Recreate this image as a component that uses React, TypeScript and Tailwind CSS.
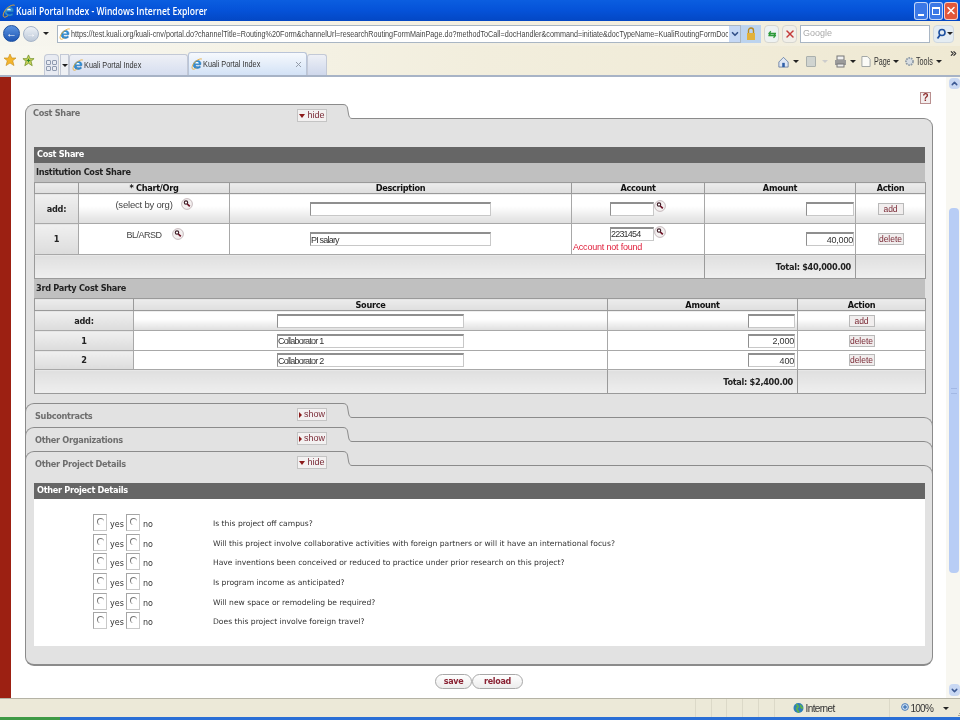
import { FC, ReactNode } from "react";
import { ChevronDown, ChevronUp, ChevronsRight, X } from "lucide-react";

const URL_TEXT =
  "https://test.kuali.org/kuali-cnv/portal.do?channelTitle=Routing%20Form&channelUrl=researchRoutingFormMainPage.do?methodToCall=docHandler&command=initiate&docTypeName=KualiRoutingFormDoc";

const verdana = "font-['DejaVu_Sans',sans-serif]";
const arial = "font-['Liberation_Sans',sans-serif]";
const boldText = "text-[8.2px] font-bold tracking-[-0.3px]";

const IeLogo: FC<{ size?: number }> = ({ size = 14 }) => (
  <svg width={size} height={size} viewBox="0 0 16 16" className="shrink-0">
    <path d="M3 9.5C3 5 7 2.5 10.5 3.5C13.5 4.5 13.5 7.5 13 9H5.5C5.8 12 9.5 12.5 12 10.5L12.5 12.5C9 15 3 14 3 9.5Z" fill="#2f8fd8" stroke="#14609f" strokeWidth="0.6" />
    <path d="M5.6 7.2H10.4C10.2 4.8 6 4.6 5.6 7.2Z" fill="#fff" />
    <path d="M14.5 1.5C12.5 0.2 6 3 2.5 9C1 12 1 14.5 2.5 15C4 15.3 6 14 7 13" fill="none" stroke="#e8a92c" strokeWidth="1.1" />
  </svg>
);

const Arrow: FC<{ className?: string }> = ({ className = "" }) => (
  <span className={`h-0 w-0 shrink-0 border-x-[3px] border-t-[3px] border-x-transparent border-t-[#222] ${className}`} />
);

const Magnifier: FC = () => (
  <svg width="12" height="12" viewBox="0 0 12 12" className="shrink-0">
    <circle cx="6" cy="6" r="5.4" fill="#f4f0f0" stroke="#b9a9ad" strokeWidth="0.8" />
    <circle cx="5" cy="4.6" r="1.7" fill="#fff" stroke="#3c1a24" strokeWidth="1.1" />
    <path d="M6.3 6L8.8 8.4" stroke="#6b1024" strokeWidth="1.7" />
  </svg>
);

// the screenshot is squeezed sideways, chrome text needs the same squeeze
const Squeezed: FC<{ w: string; scale: string; className?: string; children: ReactNode }> = ({ w, scale, className = "", children }) => (
  <span className={`${w} block shrink-0 overflow-hidden leading-[14px]`}>
    <span className={`${scale} ${className} block origin-left whitespace-nowrap leading-[14px]`}>{children}</span>
  </span>
);

const TitleBar: FC = () => (
  <div className="flex h-[21px] items-center bg-gradient-to-b from-[#0b5ee0] via-[#0552d8] to-[#0347c4] pl-[2px] pr-[2px]">
    <IeLogo />
    <Squeezed w="w-[192px]" scale="scale-x-[0.78]" className="font-['Open_Sans',sans-serif] text-[11px] font-semibold text-white">
      Kuali Portal Index - Windows Internet Explorer
    </Squeezed>
    <div className="ml-auto flex gap-[1px]">
      <div className="flex h-[18px] w-[14px] items-end justify-center rounded-[3px] border border-white/70 bg-[#3b78e6] pb-[3px]">
        <span className="h-[2px] w-[6px] bg-white" />
      </div>
      <div className="flex h-[18px] w-[14px] items-center justify-center rounded-[3px] border border-white/70 bg-[#3b78e6]">
        <span className="h-[8px] w-[8px] border border-t-2 border-white" />
      </div>
      <div className="flex h-[18px] w-[14px] items-center justify-center rounded-[3px] border border-white/70 bg-[#e2583c]">
        <X size={13} strokeWidth={3} className="text-white" />
      </div>
    </div>
  </div>
);

const AddressBar: FC = () => (
  <div className="flex h-[25px] items-center bg-gradient-to-r from-[#f7f6ef] via-[#f3efe1] to-[#f2eedd] pl-[3px]">
    <span className="h-[17px] w-[17px] rounded-full border border-[#1b4f9e] bg-gradient-to-b from-[#5b93e0] to-[#1e56b4] text-center text-[11px] font-bold leading-[14px] text-white">
      ←
    </span>
    <span className="ml-[3px] h-[16px] w-[16px] rounded-full border border-[#a6b4c8] bg-gradient-to-b from-[#eef2f7] to-[#bcc8d8] text-center text-[10px] font-bold leading-[13px] text-white">
      →
    </span>
    <Arrow className="ml-[4px]" />
    <div className="ml-[8px] flex h-[18px] w-[684px] items-center border border-[#a9b6c4] bg-white pl-[1px]">
      <IeLogo size={12} />
      <Squeezed w="w-[657px]" scale="scale-x-[0.775]" className={`${arial} text-[9.3px] text-[#444]`}>
        {URL_TEXT}
      </Squeezed>
      <span className="ml-auto flex h-full w-[11px] items-center justify-center bg-[#c5d8f5]">
        <ChevronDown size={10} strokeWidth={4} className="text-[#33518a]" />
      </span>
    </div>
    <div className="flex h-[18px] w-[20px] items-center justify-center bg-[#bcd3ee]">
      <svg width="10" height="14" viewBox="0 0 10 14">
        <path d="M2.5 6V3.5a2.5 2.5 0 0 1 5 0V6" fill="none" stroke="#b78a22" strokeWidth="1.4" />
        <rect x="1" y="6" width="8" height="7" fill="#e2b23c" />
      </svg>
    </div>
    <div className="ml-[3px] flex h-[18px] w-[15px] items-center justify-center rounded-sm border border-[#d6d6d0] bg-[#eef2f2] text-[10px] font-bold leading-none text-[#2d9a3b]">
      ⇆
    </div>
    <div className="ml-[3px] flex h-[18px] w-[15px] items-center justify-center rounded-sm border border-[#d6d6d0] bg-[#f1efe9]">
      <X size={12} strokeWidth={3} className="text-[#c43a3a]" />
    </div>
    <div className={`${arial} ml-[3px] flex h-[18px] w-[130px] items-center border border-[#a9b6c4] bg-white pl-[2px] text-[9px] text-[#aaa]`}>
      Google
    </div>
    <div className="ml-[3px] flex h-[18px] w-[21px] items-center rounded-sm border border-[#cfd8e0] bg-[#e4ecf2] pl-[2px]">
      <svg width="10" height="12" viewBox="0 0 10 12">
        <circle cx="6" cy="4.5" r="3" fill="none" stroke="#1c4fa0" strokeWidth="1.6" />
        <path d="M4 7L1.5 10.5" stroke="#1c4fa0" strokeWidth="1.8" />
      </svg>
      <Arrow className="ml-[1px]" />
    </div>
  </div>
);

const tabText = `${arial} text-[9.5px] text-[#333]`;

const TabsBar: FC = () => (
  <div className="flex h-[29px] items-end bg-gradient-to-r from-[#f8f7f0] via-[#f2eedd] to-[#efe9d3] pl-[3px]">
    <div className="mb-[4px] flex items-center gap-[5px] self-center pt-[3px]">
      <svg width="14" height="14" viewBox="0 0 14 14">
        <path d="M7 1L8.8 5H13L9.7 7.8L11 12.6L7 10L3 12.6L4.3 7.8L1 5H5.2Z" fill="#f4b52c" stroke="#c58a16" strokeWidth="0.6" />
      </svg>
      <svg width="13" height="13" viewBox="0 0 14 14">
        <path d="M7 1L8.8 5H13L9.7 7.8L11 12.6L7 10L3 12.6L4.3 7.8L1 5H5.2Z" fill="#c9d05a" stroke="#6d8f22" strokeWidth="0.8" />
        <path d="M7 5V9M5 7H9" stroke="#2c8a2c" strokeWidth="1.2" />
      </svg>
    </div>
    <div className="ml-[9px] flex h-[21px] w-[15px] items-center justify-center rounded-t-sm border border-b-0 border-[#c3c9d6] bg-[#e8ebf2]">
      <span className="grid grid-cols-2 gap-[1px]">
        <span className="h-[5px] w-[5px] rounded-[1px] border border-[#8f9bb0]" />
        <span className="h-[5px] w-[5px] rounded-[1px] border border-[#8f9bb0]" />
        <span className="h-[5px] w-[5px] rounded-[1px] border border-[#8f9bb0]" />
        <span className="h-[5px] w-[5px] rounded-[1px] border border-[#8f9bb0]" />
      </span>
    </div>
    <div className="ml-[1px] flex h-[21px] w-[9px] items-center justify-center border border-b-0 border-[#c3c9d6] bg-[#eef0f4]">
      <Arrow />
    </div>
    <div className="flex h-[21px] w-[119px] items-center rounded-t-[3px] border border-b-0 border-[#c3c9d6] bg-gradient-to-b from-[#eef0f6] to-[#d6def0] pl-[2px]">
      <IeLogo size={12} />
      <Squeezed w="w-[58px]" scale="scale-x-[0.77]" className={tabText}>Kuali Portal Index</Squeezed>
    </div>
    <div className="flex h-[23px] w-[119px] items-center rounded-t-[3px] border border-b-0 border-[#b9c4d8] bg-gradient-to-b from-[#f6f9fd] to-[#d3e2f6] pl-[2px]">
      <IeLogo size={12} />
      <Squeezed w="w-[58px]" scale="scale-x-[0.77]" className={tabText}>Kuali Portal Index</Squeezed>
      <X size={9} strokeWidth={2.5} className="ml-auto mr-[3px] text-[#8f97a5]" />
    </div>
    <div className="h-[21px] w-[20px] rounded-t-[3px] border border-b-0 border-[#c3c9d6] bg-gradient-to-b from-[#eef0f6] to-[#cfd8ec]" />
    <div className="ml-auto flex items-center self-stretch pr-[2px] pt-[2px]">
      <svg width="11" height="14" viewBox="0 0 13 14" className="shrink-0">
        <path d="M1 7L6.5 1.5L12 7V13H1Z" fill="#dfe7f4" stroke="#44618f" strokeWidth="0.8" />
        <rect x="5" y="8" width="3" height="5" fill="#2f5fa8" />
      </svg>
      <Arrow className="ml-[4px]" />
      <span className="ml-[7px] h-[11px] w-[10px] rounded-[1px] border border-[#aab0ad] bg-[#d0d4d0]" />
      <span className="ml-[6px] h-0 w-0 border-x-[3px] border-t-[3px] border-x-transparent border-t-[#ccc]" />
      <svg width="13" height="13" viewBox="0 0 13 13" className="ml-[6px] shrink-0">
        <rect x="3" y="1" width="7" height="4" fill="#f0f0f0" stroke="#777" />
        <rect x="1" y="5" width="11" height="5" fill="#9a9a9a" />
        <rect x="3" y="9" width="7" height="3" fill="#eee" stroke="#777" />
      </svg>
      <Arrow className="ml-[3px]" />
      <svg width="10" height="13" viewBox="0 0 11 13" className="ml-[5px] shrink-0">
        <path d="M1 1H7L10 4V12H1Z" fill="#fbfbf7" stroke="#9aa0a0" />
      </svg>
      <span className="ml-[3px]">
        <Squeezed w="w-[16px]" scale="scale-x-[0.72]" className={`${arial} text-[10px] text-[#333]`}>Page</Squeezed>
      </span>
      <Arrow className="ml-[3px]" />
      <svg width="11" height="13" viewBox="0 0 13 13" className="ml-[5px] shrink-0">
        <circle cx="6.5" cy="6.5" r="4.2" fill="#d7dde2" stroke="#8e9aa5" strokeWidth="2" strokeDasharray="2 1" />
      </svg>
      <span className="ml-[1px]">
        <Squeezed w="w-[17px]" scale="scale-x-[0.72]" className={`${arial} text-[10px] text-[#333]`}>Tools</Squeezed>
      </span>
      <Arrow className="ml-[3px]" />
      <ChevronsRight size={9} strokeWidth={3} className="mb-[16px] ml-[7px] text-[#333]" />
    </div>
  </div>
);

const ToggleButton: FC<{ open: boolean }> = ({ open }) => (
  <span className={`${arial} flex h-[13px] w-[30px] items-center justify-center gap-[2px] border border-[#c4c4c4] bg-[#f3f1f1] text-[9px] leading-none text-[#7a2a36]`}>
    {open ? (
      <span className="h-0 w-0 border-x-[3px] border-t-[4px] border-x-transparent border-t-[#8c1a1a]" />
    ) : (
      <span className="h-0 w-0 border-y-[3px] border-l-[3px] border-y-transparent border-l-[#8c1a1a]" />
    )}
    {open ? "hide" : "show"}
  </span>
);

const TabHeader: FC<{ title: string; open: boolean; first?: boolean }> = ({ title, open, first }) => (
  <div className={`flex h-[24px] ${first ? "bg-white" : "border-x border-[#8b8b8b] bg-[#e2e2e2]"}`}>
    <div className={`flex w-[315px] items-start rounded-tl-[9px] border-l border-t border-[#8b8b8b] bg-[#e2e2e2] pt-[4px] ${first ? "pl-[7px]" : "-ml-px pl-[9px]"}`}>
      <span className={`${verdana} ${boldText} ${first ? "-mt-[2px]" : "mt-[2px]"} leading-[12px] text-[#6e6e6e]`}>{title}</span>
      <span className="ml-auto mr-[13px]">
        <ToggleButton open={open} />
      </span>
    </div>
    <svg width="12" height="24" viewBox="0 0 12 24" className="shrink-0">
      <path d="M0 0H3C6 0 7 2 7.5 4L8.5 10C9 13 10 14.5 12 14.5V24H0Z" fill="#e2e2e2" />
      <path d="M0 0.5H3C6 0.5 7 2 7.5 4L8.5 10C9 13 10 14.5 12 14.5" fill="none" stroke="#8b8b8b" />
    </svg>
    <div className={`mt-[14px] flex-1 rounded-tr-[9px] border-r border-t border-[#8b8b8b] bg-[#e2e2e2] ${first ? "" : "-mr-px"}`} />
  </div>
);

const Field: FC<{ w: string; value?: string; right?: boolean }> = ({ w, value = "", right }) => (
  <input
    readOnly
    value={value}
    className={`${arial} ${w} ${right ? "text-right tracking-[-0.2px]" : "text-left tracking-[-0.8px]"} h-[14px] border border-[#c8c8c8] border-l-[#8f8f8f] border-t-2 border-t-[#8f8f8f] bg-white px-0 align-middle text-[9px] text-[#333] outline-none`}
  />
);

const ActionButton: FC<{ label: string }> = ({ label }) => (
  <span className={`${arial} inline-flex h-[12px] w-[26px] items-center justify-center border border-[#b9b9b9] bg-[#f1eeee] align-middle text-[8.5px] leading-none text-[#7a2a36]`}>
    {label}
  </span>
);

const th = `${verdana} ${boldText} border border-[#9a9a9a] bg-gradient-to-b from-[#ececec] to-[#dedede] p-0 text-center leading-[10px] text-[#111]`;
const rowHead = `${verdana} ${boldText} border border-[#a8a8a8] bg-gradient-to-b from-[#f0f0f0] to-[#dcdcdc] p-0 text-center leading-[10px] text-[#222]`;
const addCell = "border border-[#a8a8a8] bg-gradient-to-b from-white from-40% to-[#dedede] p-0 text-center leading-[10px]";
const cell = "border border-[#a8a8a8] bg-white p-0 text-center leading-[10px]";
const totalCell = `${verdana} ${boldText} border border-[#9a9a9a] bg-gradient-to-b from-[#dfdfdf] to-[#efefef] p-0 pr-[4px] text-right leading-[10px] text-[#222]`;

const SubHead: FC<{ title: string }> = ({ title }) => (
  <div className={`${verdana} ${boldText} flex h-[19px] items-center bg-[#c0c0c0] pl-[2px] text-[#222]`}>{title}</div>
);

const DarkHead: FC<{ title: string }> = ({ title }) => (
  <div className={`${verdana} ${boldText} flex h-[16px] items-center bg-[#666666] pb-[1px] pl-[3px] text-white`}>{title}</div>
);

const InstitutionTable: FC = () => (
  <table className="w-[891px] table-fixed border-collapse">
    <colgroup>
      <col className="w-[44px]" />
      <col className="w-[151px]" />
      <col className="w-[342px]" />
      <col className="w-[133px]" />
      <col className="w-[151px]" />
      <col className="w-[70px]" />
    </colgroup>
    <tbody>
      <tr className="h-[11px]">
        <th className={th}></th>
        <th className={th}>* Chart/Org</th>
        <th className={th}>Description</th>
        <th className={th}>Account</th>
        <th className={th}>Amount</th>
        <th className={th}>Action</th>
      </tr>
      <tr className="h-[30px]">
        <td className={rowHead}>add:</td>
        <td className={addCell}>
          <div className={`${arial} flex -translate-y-[5px] items-start justify-center gap-[8px] text-[9.5px] tracking-[-0.2px] text-[#444]`}>
            <span className="mt-[2px]">(select by org)</span>
            <Magnifier />
          </div>
        </td>
        <td className={addCell}>
          <Field w="w-[181px]" />
        </td>
        <td className={addCell}>
          <div className="flex items-start justify-center">
            <Field w="w-[44px]" />
            <span className="-mt-[2px]">
              <Magnifier />
            </span>
          </div>
        </td>
        <td className={`${addCell} pr-[1px] text-right`}>
          <Field w="w-[48px]" />
        </td>
        <td className={addCell}>
          <ActionButton label="add" />
        </td>
      </tr>
      <tr className="h-[31px]">
        <td className={rowHead}>1</td>
        <td className={cell}>
          <div className={`${arial} flex -translate-y-[5px] items-start justify-center gap-[10px] pl-[2px] text-[9px] tracking-[-0.5px] text-[#444]`}>
            <span className="mt-[2px]">BL/ARSD</span>
            <Magnifier />
          </div>
        </td>
        <td className={cell}>
          <Field w="w-[181px]" value="PI salary" />
        </td>
        <td className={cell}>
          <div className="flex items-start justify-center">
            <Field w="w-[44px]" value="2231454" />
            <span className="-mt-[1px]">
              <Magnifier />
            </span>
          </div>
          <div className={`${arial} pl-[1px] pt-[1px] text-left text-[9px] leading-[10px] tracking-[-0.2px] text-[#e0203c]`}>Account not found</div>
        </td>
        <td className={`${cell} pr-[1px] text-right`}>
          <Field w="w-[48px]" value="40,000" right />
        </td>
        <td className={cell}>
          <ActionButton label="delete" />
        </td>
      </tr>
      <tr className="h-[24px]">
        <td colSpan={4} className={totalCell}></td>
        <td className={totalCell}>Total: $40,000.00</td>
        <td className={totalCell}></td>
      </tr>
    </tbody>
  </table>
);

const partyRows = [
  { label: "1", source: "Collaborator 1", amount: "2,000", h: "h-[20px]" },
  { label: "2", source: "Collaborator 2", amount: "400", h: "h-[19px]" },
];

const PartyTable: FC = () => (
  <table className="w-[891px] table-fixed border-collapse">
    <colgroup>
      <col className="w-[99px]" />
      <col className="w-[474px]" />
      <col className="w-[190px]" />
      <col className="w-[128px]" />
    </colgroup>
    <tbody>
      <tr className="h-[12px]">
        <th className={th}></th>
        <th className={th}>Source</th>
        <th className={th}>Amount</th>
        <th className={th}>Action</th>
      </tr>
      <tr className="h-[20px]">
        <td className={rowHead}>add:</td>
        <td className={addCell}>
          <Field w="w-[187px]" />
        </td>
        <td className={`${addCell} pr-[2px] text-right`}>
          <Field w="w-[47px]" />
        </td>
        <td className={addCell}>
          <ActionButton label="add" />
        </td>
      </tr>
      {partyRows.map((r) => (
        <tr key={r.label} className={r.h}>
          <td className={rowHead}>{r.label}</td>
          <td className={cell}>
            <Field w="w-[187px]" value={r.source} />
          </td>
          <td className={`${cell} pr-[2px] text-right`}>
            <Field w="w-[47px]" value={r.amount} right />
          </td>
          <td className={cell}>
            <ActionButton label="delete" />
          </td>
        </tr>
      ))}
      <tr className="h-[24px]">
        <td colSpan={2} className={totalCell}></td>
        <td className={totalCell}>Total: $2,400.00</td>
        <td className={totalCell}></td>
      </tr>
    </tbody>
  </table>
);

const questions = [
  "Is this project off campus?",
  "Will this project involve collaborative activities with foreign partners or will it have an international focus?",
  "Have inventions been conceived or reduced to practice under prior research on this project?",
  "Is program income as anticipated?",
  "Will new space or remodeling be required?",
  "Does this project involve foreign travel?",
];

const RadioBox: FC = () => (
  <span className="flex h-[17px] w-[14px] shrink-0 items-start justify-center border border-[#c9c9c9] border-l-[#a5a5a5] border-t-[#a5a5a5] bg-white pt-[3px]">
    <span className="h-[7px] w-[7px] rounded-full border-l border-t border-[#777]" />
  </span>
);

const QuestionRow: FC<{ text: string }> = ({ text }) => (
  <div className="flex h-[19.7px] items-start">
    <div className={`${verdana} flex w-[120px] items-start pl-[59px] text-[8px] text-[#333]`}>
      <RadioBox />
      <span className="ml-[3px] mr-[2px] mt-[6px] w-[14px] leading-[10px]">yes</span>
      <RadioBox />
      <span className="ml-[3px] mt-[6px] leading-[10px]">no</span>
    </div>
    <span className={`${verdana} ml-[59px] mt-[5px] text-[7.6px] leading-[10px] text-[#333]`}>{text}</span>
  </div>
);

const PageButton: FC<{ label: string; w: string }> = ({ label, w }) => (
  <span className={`${verdana} ${w} flex h-[15px] items-center justify-center rounded-[8px] border border-[#a8a8a8] bg-gradient-to-b from-white to-[#ececec] text-[8px] font-bold tracking-[-0.3px] text-[#8a2233]`}>
    {label}
  </span>
);

const Page: FC = () => (
  <div className="min-w-0 flex-1 bg-white">
    <div className="flex h-[27px] justify-end pr-[15px] pt-[15px]">
      <span className={`${arial} flex h-[12px] w-[11px] items-center justify-center border border-[#b98f8f] bg-[#f3eeee] text-[10px] font-bold leading-none text-[#8c2a2a]`}>
        ?
      </span>
    </div>
    <div className="ml-[14px] w-[908px]">
      <TabHeader title="Cost Share" open first />
      <div className="border-x border-[#8b8b8b] bg-[#e2e2e2] pb-[9px] pl-[8px] pr-[7px] pt-[19px]">
        <DarkHead title="Cost Share" />
        <SubHead title="Institution Cost Share" />
        <InstitutionTable />
        <SubHead title="3rd Party Cost Share" />
        <PartyTable />
      </div>
      <TabHeader title="Subcontracts" open={false} />
      <TabHeader title="Other Organizations" open={false} />
      <TabHeader title="Other Project Details" open />
      <div className="rounded-b-[9px] border-x border-b-2 border-[#8b8b8b] bg-[#e2e2e2] pb-[18px] pl-[8px] pr-[7px] pt-[8px]">
        <DarkHead title="Other Project Details" />
        <div className="h-[147px] bg-white pt-[15px]">
          {questions.map((q) => (
            <QuestionRow key={q} text={q} />
          ))}
        </div>
      </div>
    </div>
    <div className="flex justify-center pl-[1px] pt-[8px]">
      <PageButton label="save" w="w-[37px]" />
      <PageButton label="reload" w="w-[51px]" />
    </div>
  </div>
);

const Scrollbar: FC = () => (
  <div className="flex w-[14px] shrink-0 flex-col items-center bg-[#f8f7f1] pl-[2px]">
    <span className="mt-[1px] flex h-[11px] w-[11px] items-center justify-center rounded-sm bg-[#c9d8f3]">
      <ChevronUp size={9} strokeWidth={4} className="text-[#3d5a94]" />
    </span>
    <span className="mt-[119px] flex h-[365px] w-[10px] items-center justify-center rounded-sm bg-[#b8cdf5]">
      <span className="h-[6px] w-[6px] border-y border-[#a2b8e4]" />
    </span>
    <span className="mb-[2px] mt-auto flex h-[12px] w-[11px] items-center justify-center rounded-sm bg-[#c9d8f3]">
      <ChevronDown size={9} strokeWidth={4} className="text-[#3d5a94]" />
    </span>
  </div>
);

const StatusBar: FC = () => (
  <div className="flex h-[19px] items-center border-t border-[#b5b3a5] bg-[#ece9d8]">
    <div className="ml-[695px] h-full w-[16px] border-l border-[#dcd9c8]" />
    <div className="h-full w-[16px] border-l border-[#dcd9c8]" />
    <div className="h-full w-[16px] border-l border-[#dcd9c8]" />
    <div className="h-full w-[16px] border-l border-[#dcd9c8]" />
    <div className="h-full w-[16px] border-l border-[#dcd9c8]" />
    <div className="flex h-full w-[117px] items-center border-l border-[#dcd9c8] pl-[18px]">
      <svg width="11" height="12" viewBox="0 0 11 12" className="shrink-0">
        <circle cx="5.5" cy="6" r="5" fill="#2f7fb8" />
        <path d="M3 2.5C5 3 6 5 4 6C3 7 5 9 6 10.5M8 3C7 5 9 6 10 6" fill="none" stroke="#5db24a" strokeWidth="1.8" />
      </svg>
      <span className={`${arial} ml-[2px] text-[10px] tracking-[-0.6px] text-[#333]`}>Internet</span>
    </div>
    <div className="flex h-full flex-1 items-center border-l border-[#dcd9c8] pl-[11px]">
      <svg width="9" height="11" viewBox="0 0 9 11" className="shrink-0">
        <circle cx="4" cy="4" r="3.4" fill="#cfe0f3" stroke="#4f7fb8" />
        <path d="M4 2V6M2 4H6" stroke="#1f5fa8" />
      </svg>
      <span className={`${arial} ml-[1px] text-[10px] tracking-[-0.8px] text-[#333]`}>100%</span>
      <Arrow className="ml-[10px]" />
      <span className="ml-[9px] grid grid-cols-3 gap-[1px] self-end pb-[1px]">
        <span className="h-px w-px" />
        <span className="h-px w-px" />
        <span className="h-px w-px bg-[#a8a594]" />
        <span className="h-px w-px" />
        <span className="h-px w-px bg-[#a8a594]" />
        <span className="h-px w-px bg-[#a8a594]" />
        <span className="h-px w-px bg-[#a8a594]" />
        <span className="h-px w-px bg-[#a8a594]" />
        <span className="h-px w-px bg-[#a8a594]" />
      </span>
    </div>
  </div>
);

const App: FC = () => (
  <div className="flex h-[720px] w-[960px] flex-col overflow-hidden bg-white blur-[0.3px]">
    <TitleBar />
    <AddressBar />
    <TabsBar />
    <div className="h-[2px] bg-[#a7b3c6]" />
    <div className="flex h-[621px] min-h-0">
      <div className="w-[11px] shrink-0 bg-[#9c2012]" />
      <Page />
      <Scrollbar />
    </div>
    <StatusBar />
    <div className="flex h-[3px] bg-[#2a6fd6]">
      <div className="w-[60px] bg-[#3f9a45]" />
    </div>
  </div>
);

export default App;
